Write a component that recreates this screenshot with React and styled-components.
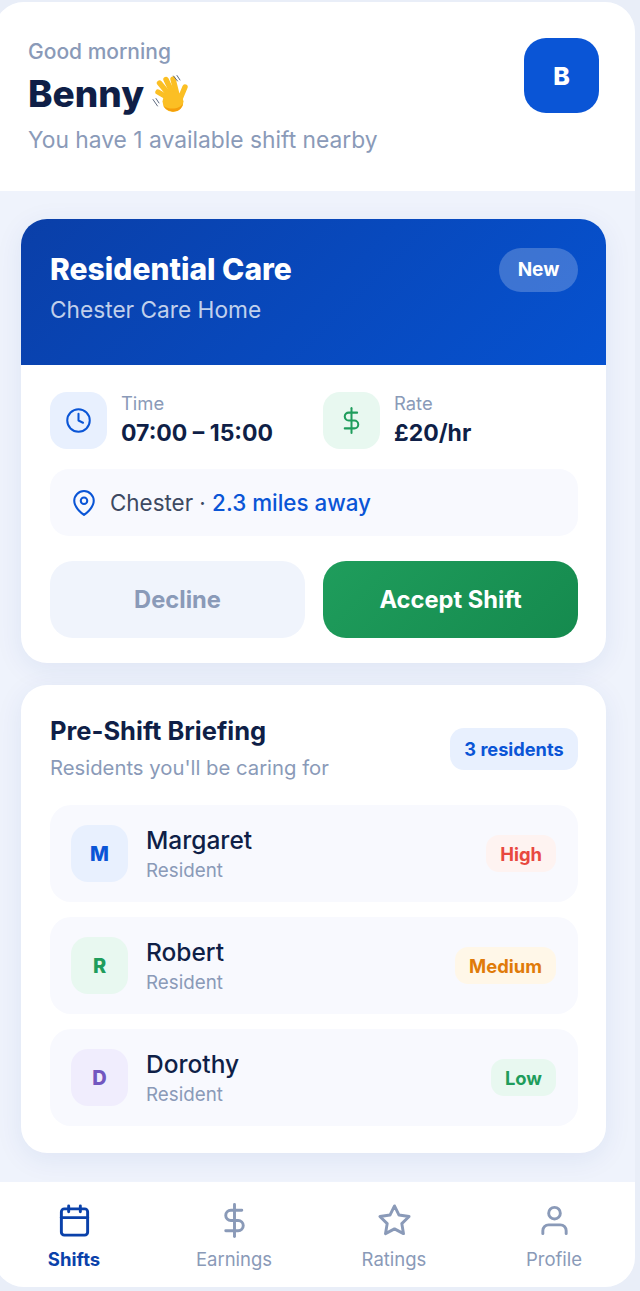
import React from 'react';
import styled, { createGlobalStyle } from 'styled-components';
import { FiClock, FiDollarSign, FiMapPin, FiCalendar, FiStar, FiUser } from 'react-icons/fi';

const GlobalStyle = createGlobalStyle`
  html, body {
    margin: 0;
    padding: 0;
    background: #e9eef8;
    font-family: Inter, "Noto Sans", sans-serif;
  }
  * { box-sizing: border-box; }
`;

const Shell = styled.div`
  width: 641px;
  margin: 2px 0 0 -6px;
  background: #eff3fc;
  border-radius: 30px;
  overflow: hidden;
`;

const Header = styled.header`
  height: 189px;
  background: #fff;
  padding: 36px 36px 0 34px;
  display: flex;
  justify-content: space-between;
  align-items: flex-start;
`;

const Greeting = styled.div`
  font-size: 21px;
  line-height: 28px;
  font-weight: 500;
  color: #8a9ab8;
`;

const Name = styled.h1`
  margin: 3px 0 0;
  display: flex;
  align-items: center;
  gap: 8px;
  font-size: 37px;
  line-height: 50px;
  font-weight: 800;
  color: #0f1f47;
`;

const Nearby = styled.p`
  margin: 6px 0 0;
  font-size: 22.8px;
  line-height: 30px;
  color: #8a9ab8;
`;

const Avatar = styled.div`
  width: 75px;
  height: 75px;
  border-radius: 22px;
  background: #0a55d6;
  color: #fff;
  font-size: 25px;
  font-weight: 800;
  display: flex;
  align-items: center;
  justify-content: center;
`;

const Main = styled.main`
  padding: 28px 29px 29px 27px;
  display: flex;
  flex-direction: column;
  gap: 22px;
`;

const Card = styled.section`
  background: #fff;
  border-radius: 26px;
  overflow: hidden;
  box-shadow: 0 6px 28px rgba(20, 60, 150, 0.08);
`;

const Hero = styled.div`
  height: 146px;
  padding: 29px 28px 0 29px;
  background: linear-gradient(135deg, #0a3fa8, #0652d0);
  display: flex;
  justify-content: space-between;
  align-items: flex-start;
`;

const HeroTitle = styled.h2`
  margin: 0;
  font-size: 30px;
  line-height: 42px;
  font-weight: 800;
  color: #fff;
`;

const HeroSub = styled.div`
  margin-top: 4px;
  font-size: 22.7px;
  line-height: 32px;
  color: rgba(255, 255, 255, 0.75);
`;

const NewBadge = styled.span`
  width: 79px;
  height: 44px;
  padding-bottom: 1px;
  border-radius: 22px;
  background: rgba(255, 255, 255, 0.22);
  color: #fff;
  font-size: 19px;
  font-weight: 700;
  display: flex;
  align-items: center;
  justify-content: center;
`;

const Body = styled.div`
  padding: 27px 28px 25px 29px;
`;

const Facts = styled.div`
  display: grid;
  grid-template-columns: 255px 255px;
  column-gap: 18px;
`;

const Fact = styled.div`
  display: flex;
  align-items: center;
  gap: 14px;
`;

const IconTile = styled.div`
  width: 57px;
  height: 57px;
  flex: none;
  border-radius: 17px;
  background: ${p => p.$bg};
  color: ${p => p.$fg};
  font-size: 20px;
  font-weight: 800;
  display: flex;
  align-items: center;
  justify-content: center;
`;

const FactLabel = styled.div`
  font-size: 18.4px;
  line-height: 23px;
  color: #8a9ab8;
`;

const FactValue = styled.div`
  margin-top: 3px;
  font-size: 23px;
  line-height: 31px;
  font-weight: 700;
  color: #0f1f47;
`;

const Location = styled.div`
  margin-top: 20px;
  height: 67px;
  border-radius: 19px;
  background: #f8f9fe;
  padding-left: 21px;
  display: flex;
  align-items: center;
  gap: 13px;
  font-size: 22.4px;
  color: #3d4962;
  svg { color: #0a55d6; }
  strong {
    font-weight: 500;
    color: #0a55d6;
  }
`;

const Actions = styled.div`
  margin-top: 25px;
  display: grid;
  grid-template-columns: 255px 255px;
  column-gap: 18px;
`;

const Button = styled.button`
  height: 77px;
  border: 0;
  border-radius: 23px;
  font-family: inherit;
  font-size: 23.7px;
  font-weight: 700;
  color: ${p => (p.$primary ? '#fff' : '#8a9ab8')};
  background: ${p => (p.$primary ? 'linear-gradient(135deg, #1f9d5c, #158a4e)' : '#f0f4fc')};
`;

const Briefing = styled.div`
  padding: 27px 28px 27px 29px;
`;

const BriefingHead = styled.div`
  display: flex;
  justify-content: space-between;
  align-items: center;
`;

const BriefingTitle = styled.h3`
  margin: 0;
  font-size: 25.5px;
  line-height: 38px;
  font-weight: 700;
  color: #0f1f47;
`;

const BriefingSub = styled.div`
  margin-top: 3px;
  font-size: 20.3px;
  line-height: 30px;
  color: #8a9ab8;
`;

const CountBadge = styled.span`
  width: 128px;
  height: 42px;
  margin-top: 2px;
  border-radius: 14px;
  background: #e8f0fe;
  color: #0a55d6;
  font-size: 18.2px;
  font-weight: 700;
  display: flex;
  align-items: center;
  justify-content: center;
`;

const Residents = styled.div`
  margin-top: 22px;
  display: flex;
  flex-direction: column;
  gap: 15px;
`;

const Row = styled.div`
  height: 97px;
  border-radius: 21px;
  background: #f8f9fe;
  padding: 0 22px 0 21px;
  display: flex;
  align-items: center;
  gap: 18px;
`;

const RowText = styled.div`
  flex: 1;
`;

const RowName = styled.div`
  font-size: 24.5px;
  line-height: 34px;
  font-weight: 500;
  color: #0f1f47;
`;

const RowRole = styled.div`
  font-size: 18.8px;
  line-height: 27px;
  color: #8a9ab8;
`;

const Priority = styled.span`
  height: 37px;
  padding: 0 14px;
  border-radius: 13px;
  background: ${p => p.$bg};
  color: ${p => p.$fg};
  font-size: 18.4px;
  font-weight: 700;
  display: flex;
  align-items: center;
`;

const Nav = styled.nav`
  height: 105px;
  background: #fff;
  padding-right: 1px;
  display: grid;
  grid-template-columns: repeat(4, 1fr);
`;

const NavItem = styled.div`
  padding-top: 21px;
  display: flex;
  flex-direction: column;
  align-items: center;
  gap: 7px;
  font-size: 18.5px;
  line-height: 28px;
  font-weight: ${p => (p.$active ? 700 : 400)};
  color: ${p => (p.$active ? '#0a41aa' : '#8a9ab8')};
`;

const HandSvg = styled.svg`
  width: 38px;
  height: 38px;
  flex: none;
`;

const fingers = [
  [30, 28, 18, 21],
  [32, 27, 19.5, 12],
  [34, 25, 26, 8.5],
  [37, 24, 33, 8],
  [40, 28, 45, 16],
];

const Hand = () => (
  <HandSvg viewBox="12 4 38 38" aria-hidden="true">
    <g stroke="#fbbf24" strokeWidth="5.4" strokeLinecap="round">
      {fingers.map(([x1, y1, x2, y2]) => (
        <line key={x2} x1={x1} y1={y1} x2={x2} y2={y2} />
      ))}
    </g>
    <circle cx="33" cy="30.500" r="10.500" fill="#fbbf24" />
    <path d="M23.500 35c3 5 11 7.500 16 3.500 2-1.600 3.300-4 3.700-6.500-2 5-12 8-19.700 3z" fill="#f59e0b" />
    <path d="M33.500 5l4 5M37 4.500l3 4.500M13 28.500l4.500 6.500M16 27.500l3 4.500" fill="none" stroke="#5f6b80" strokeWidth="1" strokeLinecap="round" />
  </HandSvg>
);

const residents = [
  { name: 'Margaret', level: 'High', tile: ['#e8f0fe', '#0a55d6'], tag: ['#fef3f1', '#e8483f'] },
  { name: 'Robert', level: 'Medium', tile: ['#e8f8f0', '#1f9d5c'], tag: ['#fff7e8', '#e07b0a'] },
  { name: 'Dorothy', level: 'Low', tile: ['#f0edfd', '#7257c0'], tag: ['#e8f8f0', '#1f9d5c'] },
];

const navItems = [
  { label: 'Shifts', Icon: FiCalendar, active: true },
  { label: 'Earnings', Icon: FiDollarSign },
  { label: 'Ratings', Icon: FiStar },
  { label: 'Profile', Icon: FiUser },
];

export default function App() {
  return (
    <>
      <GlobalStyle />
      <Shell>
        <Header>
          <div>
            <Greeting>Good morning</Greeting>
            <Name>Benny <Hand /></Name>
            <Nearby>You have 1 available shift nearby</Nearby>
          </div>
          <Avatar>B</Avatar>
        </Header>
        <Main>
          <Card>
            <Hero>
              <div>
                <HeroTitle>Residential Care</HeroTitle>
                <HeroSub>Chester Care Home</HeroSub>
              </div>
              <NewBadge>New</NewBadge>
            </Hero>
            <Body>
              <Facts>
                <Fact>
                  <IconTile $bg="#e8f0fe" $fg="#0a55d6"><FiClock size={27} strokeWidth={1.8} /></IconTile>
                  <div>
                    <FactLabel>Time</FactLabel>
                    <FactValue>07:00 – 15:00</FactValue>
                  </div>
                </Fact>
                <Fact>
                  <IconTile $bg="#e8f8f0" $fg="#1f9d5c"><FiDollarSign size={27} strokeWidth={1.8} /></IconTile>
                  <div>
                    <FactLabel>Rate</FactLabel>
                    <FactValue>£20/hr</FactValue>
                  </div>
                </Fact>
              </Facts>
              <Location>
                <FiMapPin size={26} strokeWidth={1.9} />
                <span>Chester · <strong>2.3 miles away</strong></span>
              </Location>
              <Actions>
                <Button>Decline</Button>
                <Button $primary>Accept Shift</Button>
              </Actions>
            </Body>
          </Card>
          <Card>
            <Briefing>
              <BriefingHead>
                <div>
                  <BriefingTitle>Pre-Shift Briefing</BriefingTitle>
                  <BriefingSub>Residents you'll be caring for</BriefingSub>
                </div>
                <CountBadge>3 residents</CountBadge>
              </BriefingHead>
              <Residents>
                {residents.map(r => (
                  <Row key={r.name}>
                    <IconTile $bg={r.tile[0]} $fg={r.tile[1]}>{r.name[0]}</IconTile>
                    <RowText>
                      <RowName>{r.name}</RowName>
                      <RowRole>Resident</RowRole>
                    </RowText>
                    <Priority $bg={r.tag[0]} $fg={r.tag[1]}>{r.level}</Priority>
                  </Row>
                ))}
              </Residents>
            </Briefing>
          </Card>
        </Main>
        <Nav>
          {navItems.map(({ label, Icon, active }) => (
            <NavItem key={label} $active={active}>
              <Icon size={35} strokeWidth={2} />
              {label}
            </NavItem>
          ))}
        </Nav>
      </Shell>
    </>
  );
}
